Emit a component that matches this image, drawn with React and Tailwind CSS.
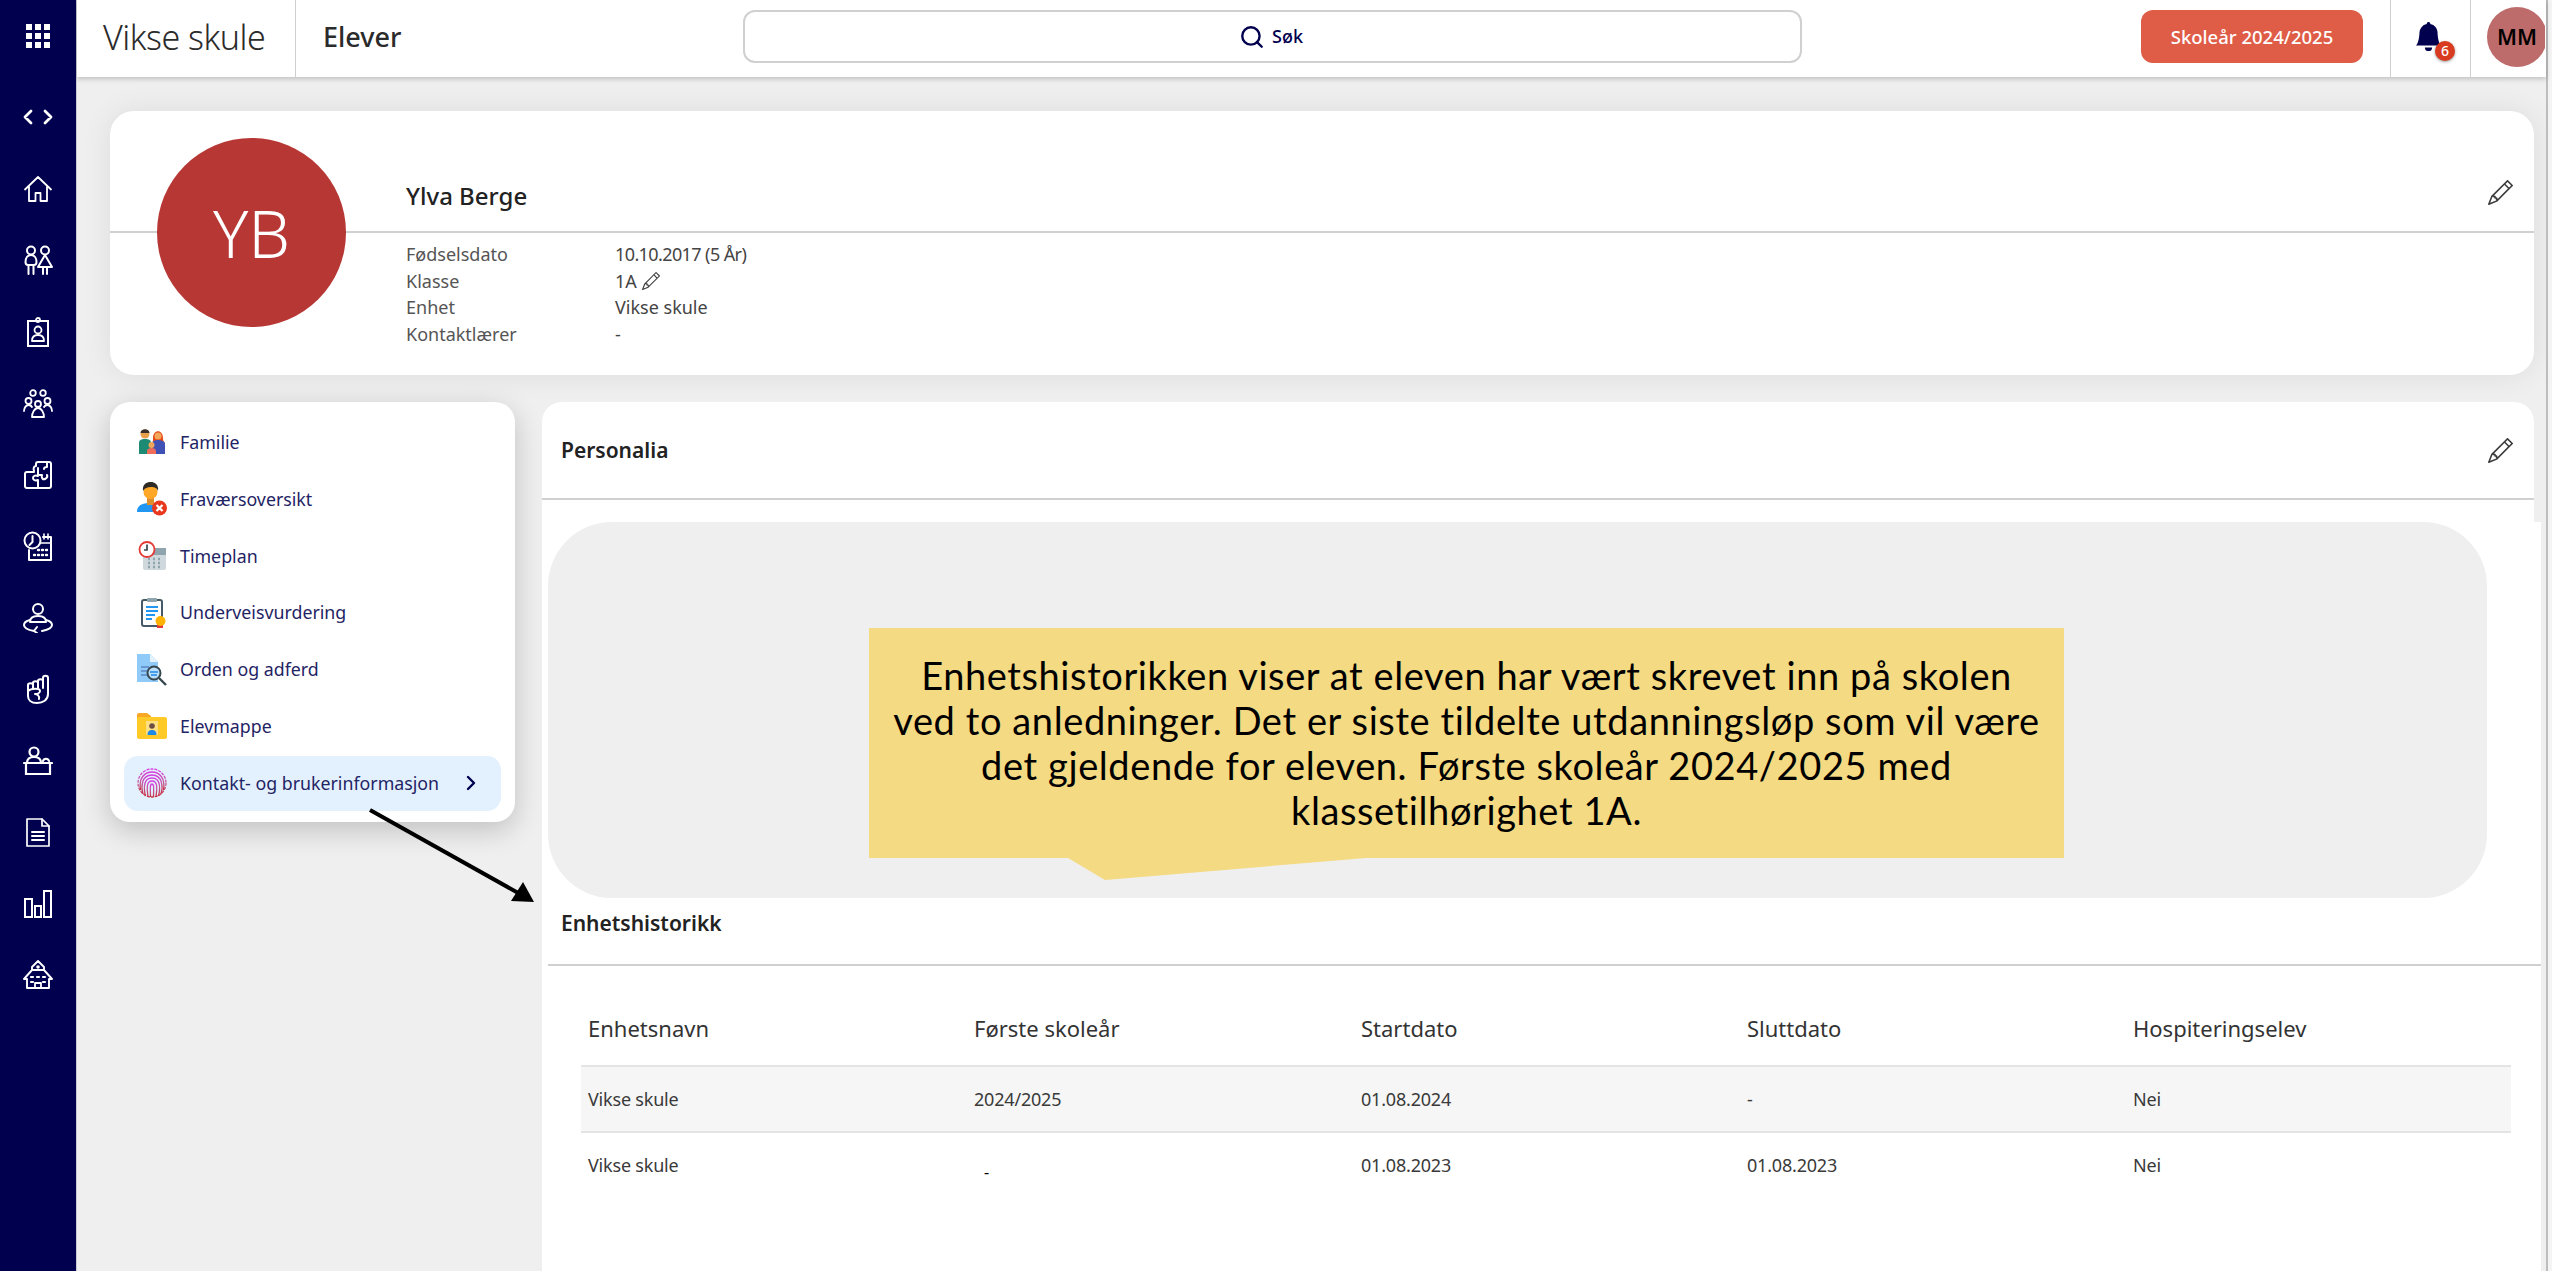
import { Search, ChevronRight } from 'lucide-react';
import { BsPencil, BsBellFill } from 'react-icons/bs';

const uiFont = "font-['Noto_Sans',sans-serif]";

function Ico({ children, sw = 1.8 }) {
  return (
    <svg viewBox="0 0 30 30" fill="none" stroke="white" strokeWidth={sw} strokeLinejoin="round" strokeLinecap="round" className="w-[30px] h-[30px]">
      {children}
    </svg>
  );
}

const sideIcons = [
  <Ico key="home"><path d="M2 15.5 15 3l13 12.500M6 12.500V27h6.500v-8h5v8H24V12.500" /></Ico>,
  <Ico key="kids" sw={2}><circle cx="8" cy="5.500" r="4" /><circle cx="22" cy="5.500" r="4" /><path d="M2.500 17c0-4 2-7 5.500-7s5.500 3 5.500 7c0 2-1 3-2.500 3H5c-1.500 0-2.500-1-2.500-3ZM5.500 20v9M10.500 20v9M22 10l7 12H15ZM20 22v7M24 22v7" /></Ico>,
  <Ico key="badge"><rect x="5" y="4" width="20" height="25" strokeLinejoin="miter" strokeWidth="2" /><circle cx="15" cy="3" r="2" /><circle cx="15" cy="13" r="3.500" /><path d="M9 24c0-4 2-6 6-6s6 2 6 6Z" /></Ico>,
  <Ico key="people"><circle cx="10" cy="5" r="2.800" /><circle cx="20" cy="5" r="2.800" /><circle cx="5.500" cy="13" r="3" /><circle cx="15" cy="16" r="3" /><circle cx="24.500" cy="13" r="3" /><path d="M1 23c0-3 2-6 4.500-6s3 1 3.500 2M29 23c0-3-2-6-4.500-6s-3 1-3.500 2M9 29c0-4 2.500-9 6-9s6 5 6 9Z" /></Ico>,
  <Ico key="puzzle" sw={2}><path d="M11 11c-1-3 0-5 2-5V4a2 2 0 0 1 2-2h11a2 2 0 0 1 2 2v22a2 2 0 0 1-2 2H4a2 2 0 0 1-2-2V14a2 2 0 0 1 2-2h7" /><path d="M15 8v8c-3-1-5 0-5 2s2 3 5 2v8M15 15h4c-1 3 1 5 3 4s3-2 2-4M24 2v5c-2 0-3 1-3 2" /></Ico>,
  <Ico key="calendar" sw={2}><circle cx="9.500" cy="9.500" r="8" /><path d="M9.500 5v6l-3 3M20 6h8v23H6v-10" /><path d="M21 3v5M25 3v5M18 12h10" strokeWidth="1.600" /><path d="M11 24h1M15 24h1M19 24h1M23 24h1M15 19h1M19 19h1M23 19h1" strokeWidth="2.400" /></Ico>,
  <Ico key="rotate" sw={2}><circle cx="15" cy="6" r="5" /><path d="M7 19c0-4 3-6 8-6s8 2 8 6Z" /><path d="M7 17c-4 1-6 3-6 5 0 3 4 5 10 6M23 17c4 1 6 3 6 5 0 3-5 5-10 6M14 24l-3 4 3 2" /></Ico>,
  <Ico key="hand" sw={2}><path d="M20 14V4c0-3 5-3 5 0v13M15 14V7c0-2.500 5-2.500 5 0M10 14V9c0-2.500 5-2.500 5 0M5 16v-5c0-2.500 5-2.500 5 0" /><path d="M5 15v7c0 4 3 7 9 7s11-3 11-9v-3" /><path d="M5 17c3-3 12-3 12 0 0 2-3 3-5 3 2 0 5 2 4 5" /></Ico>,
  <Ico key="desk" sw={2.200}><circle cx="11" cy="6" r="4.500" /><path d="M4 17c0-4 3-6 7-6s7 2 7 6M20 15c1-3 5-3 6 0" /><path d="M3 17h24v11H3ZM1 17h28" strokeLinejoin="miter" /></Ico>,
  <Ico key="doc" sw={1.700}><path d="M4 2h15l7 7v20H4Z" /><path d="M19 2v7h7" /><path d="M9 15h12M9 19h12M9 23h12" strokeWidth="2" /></Ico>,
  <Ico key="chart" sw={2}><path d="M2 10h7v18H2ZM12 17h6v11h-6ZM21 2h7v26h-7Z" strokeLinejoin="miter" /></Ico>,
  <Ico key="school"><path d="M15 1l6 6v3l8 9h-3v9H4v-9H1l8-9V7Z" strokeWidth="1.900" /><path d="M9 10h12" /><circle cx="15" cy="7" r="1.800" fill="white" stroke="none" /><path d="M12 28v-5h6v5" /><path d="M8 17h2M14 17h2M20 17h2M8 22h2M20 22h2" strokeWidth="2.200" /></Ico>,
];

function Sidebar() {
  return (
    <aside className="w-[77px] shrink-0 bg-[#00004f] border-r border-[#c9c9d8] flex flex-col items-center">
      <div className="h-[72px] flex items-center">
        <div className="grid grid-cols-3 gap-[3px]">
          {[...Array(9)].map((_, i) => (
            <span key={i} className="w-[6px] h-[6px] bg-white" />
          ))}
        </div>
      </div>
      <div className="h-[72px] mt-[9px] flex items-center">
        <svg viewBox="0 0 30 16" fill="none" stroke="white" strokeWidth="2.800" strokeLinecap="round" strokeLinejoin="round" className="w-[30px] h-[16px]">
          <path d="M8 2 2 8l6 6M22 2l6 6-6 6" />
        </svg>
      </div>
      {sideIcons.map((icon, i) => (
        <div key={i} className="h-[71.500px] flex items-center shrink-0">
          {icon}
        </div>
      ))}
    </aside>
  );
}

function Header() {
  return (
    <header className={`h-[77px] shrink-0 bg-white flex items-stretch shadow-[0_2px_5px_rgba(0,0,0,0.2)] z-10 ${uiFont}`}>
      <div className="w-[219px] border-r border-[#cfcfcf] pl-[26px] pb-[3px] flex items-center text-[34px] font-light text-[#2b2b2b] tracking-[-0.5px]">
        Vikse skule
      </div>
      <div className="w-[447px] pl-[27px] pb-[3px] flex items-center text-[27px] font-medium text-[#2b2b2b]">Elever</div>
      <button className="w-[1059px] h-[53px] mb-[4px] self-center border-2 border-[#d0d0d0] rounded-[12px] flex items-center justify-center gap-[7px] text-[#00004f] text-[18px] font-medium pr-[3px]">
        <Search size={26} strokeWidth={2.2} />
        Søk
      </button>
      <button className="ml-[339px] w-[222px] h-[53px] mb-[4px] self-center rounded-[12px] bg-[#df5c47] text-white text-[18.500px] font-medium">
        Skoleår 2024/2025
      </button>
      <div className="ml-[27px] w-[81px] border-x border-[#cfcfcf] flex items-center justify-center relative">
        <BsBellFill className="text-[#00004f] text-[29px] -translate-y-[2px] -translate-x-[2px]" />
        <span className="absolute left-[44px] top-[41px] w-[20px] h-[20px] rounded-full bg-[#d83b1f] text-white text-[14px] leading-[20px] text-center font-medium shadow-[0_1px_3px_rgba(0,0,0,0.4)]">
          6
        </span>
      </div>
      <div className="ml-[16px] w-[58px] overflow-hidden self-center mb-[3px] shrink-0">
        <div className="w-[60px] h-[60px] rounded-full bg-[#bd6b6b] text-black text-[21.500px] font-semibold flex items-center justify-center">
          MM
        </div>
      </div>
    </header>
  );
}

function ProfileCard() {
  const rows = [
    ['Fødselsdato', '10.10.2017 (5 År)', 'tracking-[-0.6px]'],
    ['Klasse', '1A', ''],
    ['Enhet', 'Vikse skule', ''],
    ['Kontaktlærer', '-', ''],
  ];
  return (
    <section className="relative h-[264px] rounded-[24px] bg-white shadow-[0_0_30px_rgba(0,0,0,0.08)]">
      <div className="h-[122px] border-b-2 border-[#d0d0d0] pl-[296px] pr-[21px] flex items-end justify-between">
        <h1 className="text-[24px] font-medium text-[#222] leading-[34px] pb-[18px]">Ylva Berge</h1>
        <BsPencil className="text-[#3c3c3c] text-[25px] mb-[26px]" />
      </div>
      <div className="pl-[296px] pt-[8px] text-[18px] leading-[26.600px] text-[#444]">
        {rows.map(([k, v, extra]) => (
          <div key={k} className="flex">
            <span className="w-[209px] text-[#555]">{k}</span>
            <span className={`flex items-center gap-[5px] ${extra}`}>
              {v}
              {k === 'Klasse' && <BsPencil className="text-[18px] text-[#3c3c3c]" />}
            </span>
          </div>
        ))}
      </div>
      <div className="absolute left-[47px] top-[27px] w-[189px] h-[189px] rounded-full bg-[#b73735] text-white text-[66px] font-light flex items-center justify-center">
        YB
      </div>
    </section>
  );
}

function FamilyIcon() {
  return (
    <svg viewBox="0 0 30 30" className="w-[30px] h-[30px]">
      <circle cx="8" cy="7" r="4.500" fill="#e9a04c" />
      <path d="M3.500 6c0-5 9-5 9 0-3 0-6 0-9 0Z" fill="#3a2f2a" />
      <path d="M2 27V16c0-3 2-4 6-4s6 1 6 4v11Z" fill="#1d8a73" />
      <path d="M16 11c0-9 10-9 10 0 0 3 1 4 2 5H15c1-1 1-2 1-5Z" fill="#e64a19" />
      <circle cx="21" cy="9" r="3.500" fill="#f2a65a" />
      <path d="M15 27V17c0-3 3-4 6-4s7 1 7 4v10Z" fill="#3f51b5" />
      <circle cx="14.500" cy="18" r="3" fill="#f2a65a" />
      <path d="M10 27v-3c0-2 2-3 4.500-3s4.500 1 4.500 3v3Z" fill="#ef6c5a" />
    </svg>
  );
}

function AbsenceIcon() {
  return (
    <svg viewBox="0 0 30 34" className="w-[30px] h-[34px]">
      <path d="M0 30c0-6 4-9 13-9s13 3 13 9Z" fill="#2196f3" />
      <rect x="10" y="15" width="7" height="8" fill="#e08e2b" />
      <circle cx="13.500" cy="10" r="7" fill="#ffa726" />
      <path d="M6 9c-1-8 5-9 8-9s8 2 7 9c-1-3-3-4-7-4s-6 1-8 4Z" fill="#2e2a26" />
      <circle cx="22.500" cy="26" r="7.500" fill="#e8391f" />
      <path d="m19.500 23 6 6m0-6-6 6" stroke="white" strokeWidth="2.200" />
    </svg>
  );
}

function ScheduleIcon() {
  return (
    <svg viewBox="0 0 30 30" className="w-[30px] h-[30px]">
      <rect x="6" y="7" width="23" height="22" rx="2" fill="#cfd8dc" />
      <path d="M8 7h21v7H8Z" fill="#90a4ae" />
      <path d="M11 18h2M16 18h2M21 18h2M11 22h2M16 22h2M21 22h2M11 26h2M16 26h2M21 26h2" stroke="#90a4ae" strokeWidth="2.500" />
      <circle cx="10" cy="8.500" r="7.500" fill="white" stroke="#e53935" strokeWidth="1.800" />
      <path d="M10 3.500v5.500H7" stroke="#37474f" strokeWidth="1.700" fill="none" />
    </svg>
  );
}

function AssessmentIcon() {
  return (
    <svg viewBox="0 0 30 32" className="w-[30px] h-[32px]">
      <rect x="5" y="3" width="20" height="26" rx="2" fill="white" stroke="#455a64" strokeWidth="2" />
      <rect x="10" y="1" width="10" height="4" rx="1" fill="#90a4ae" />
      <path d="M9 10h12M9 14h12M9 18h9M9 22h6" stroke="#2196f3" strokeWidth="2" />
      <path d="M20 27h6v4h-6Z" fill="#e53935" />
      <circle cx="23.500" cy="24" r="5" fill="#ffb300" />
    </svg>
  );
}

function ConductIcon() {
  return (
    <svg viewBox="0 0 30 32" className="w-[30px] h-[32px]">
      <path d="M0 0h13l8 8v20H0Z" fill="#90caf9" />
      <path d="M13 0l8 8h-8Z" fill="#e3f2fd" />
      <path d="M4 13h8M4 17h6M4 21h6" stroke="#5c86c4" strokeWidth="1.500" />
      <circle cx="17" cy="19" r="6.500" fill="#bbdefb" stroke="#37474f" strokeWidth="2" />
      <path d="M13 18h8M14 21h6" stroke="#1e88e5" strokeWidth="1.500" />
      <path d="m22 24 7 7" stroke="#37474f" strokeWidth="2.400" />
    </svg>
  );
}

function FolderIcon() {
  return (
    <svg viewBox="0 0 30 26" className="w-[30px] h-[26px]">
      <path d="M0 2a2 2 0 0 1 2-2h8l4 3v3H0Z" fill="#f9a825" />
      <rect x="0" y="4" width="30" height="22" rx="2" fill="#ffca28" />
      <rect x="9" y="8" width="12" height="14" fill="#ffe082" />
      <circle cx="15" cy="13" r="2.800" fill="#6d4c41" />
      <path d="M10.500 22c0-4 2-5 4.500-5s4.500 1 4.500 5Z" fill="#1e88e5" />
    </svg>
  );
}

function FingerprintIcon() {
  return (
    <svg viewBox="0 0 30 30" fill="none" strokeWidth="1.300" className="w-[30px] h-[30px]">
      <defs>
        <linearGradient id="fp" x1="0" y1="0" x2="0" y2="1">
          <stop offset="0" stopColor="#d63be0" />
          <stop offset="0.500" stopColor="#c45a9a" />
          <stop offset="1" stopColor="#c9303f" />
        </linearGradient>
      </defs>
      <g stroke="url(#fp)">
        <circle cx="15" cy="15" r="14" strokeDasharray="3 1" />
        <path d="M3.500 22c-2-12 4-18 11.500-18s13.500 6 11.500 18" />
        <path d="M6 26c-2-6-2-19 9-19s11 13 9 19" />
        <path d="M8.500 28c-2-8-2-18 6.500-18s8.500 10 6.500 18" />
        <path d="M11 29c-1-8-2-16 4-16s5 8 4 16" />
        <path d="M13.500 29c0-6-1-13 1.500-13s1.500 7 1.500 13" />
      </g>
    </svg>
  );
}

const menuItems = [
  ['Familie', <FamilyIcon key="a" />],
  ['Fraværsoversikt', <AbsenceIcon key="b" />],
  ['Timeplan', <ScheduleIcon key="c" />],
  ['Underveisvurdering', <AssessmentIcon key="d" />],
  ['Orden og adferd', <ConductIcon key="e" />],
  ['Elevmappe', <FolderIcon key="f" />],
];

function SideMenu() {
  return (
    <nav className="w-[405px] h-[420px] shrink-0 rounded-[20px] bg-white px-[14px] pt-[12px] shadow-[0_8px_28px_rgba(0,0,0,0.2)] text-[17.800px] text-[#1f2464]">
      {menuItems.map(([label, icon]) => (
        <div key={label} className="h-[56.800px] flex items-center pl-[13px]">
          <span className="w-[43px] flex justify-start">{icon}</span>
          {label}
        </div>
      ))}
      <div className="h-[55px] mt-[1px] rounded-[14px] bg-[#e3f1fe] flex items-center pl-[13px] pr-[18px]">
        <span className="w-[43px] flex justify-start"><FingerprintIcon /></span>
        <span className="flex-1">Kontakt- og brukerinformasjon</span>
        <ChevronRight size={24} strokeWidth={2.4} className="text-[#00004f]" />
      </div>
    </nav>
  );
}

function Callout() {
  return (
    <div className="h-[376px] ml-[6px] mr-[54px] mt-[22px] rounded-[64px] bg-[#efefef] pt-[106px] pl-[321px]">
      <div className="relative w-[1195px] h-[230px] bg-[#f4da82] flex items-center justify-center text-center text-black text-[38px] leading-[45px] tracking-[0.6px] font-['Lato',sans-serif]">
        <p>
          Enhetshistorikken viser at eleven har vært skrevet inn på skolen
          <br />
          ved to anledninger. Det er siste tildelte utdanningsløp som vil være
          <br />
          det gjeldende for eleven. Første skoleår 2024/2025 med
          <br />
          klassetilhørighet 1A.
        </p>
        <svg viewBox="0 0 298 22" className="absolute left-[199px] top-[230px] w-[298px] h-[22px]">
          <path d="M0 0 37 22 298 0Z" fill="#f4da82" />
        </svg>
      </div>
    </div>
  );
}

const cols = ['Enhetsnavn', 'Første skoleår', 'Startdato', 'Sluttdato', 'Hospiteringselev'];

function HistoryTable() {
  const gridCols = 'grid grid-cols-[386px_387px_386px_386px_1fr] pl-[7px] items-center';
  return (
    <div className="ml-[39px] mr-[30px] mt-[37px] text-[#3a3a3a]">
      <div className={`${gridCols} h-[62px] pb-[12px] text-[22px] text-[#333]`}>
        {cols.map((c) => (
          <span key={c}>{c}</span>
        ))}
      </div>
      <div className={`${gridCols} h-[68px] bg-[#f6f6f6] border-y-2 border-[#e4e4e4] text-[18px] [&>*]:tracking-[-0.2px]`}>
        <span>Vikse skule</span>
        <span>2024/2025</span>
        <span>01.08.2024</span>
        <span>-</span>
        <span>Nei</span>
      </div>
      <div className={`${gridCols} h-[64px] text-[18px] [&>*]:tracking-[-0.2px]`}>
        <span>Vikse skule</span>
        <span className="pl-[10px] pt-[14px] text-[16px] text-black">-</span>
        <span>01.08.2023</span>
        <span>01.08.2023</span>
        <span>Nei</span>
      </div>
    </div>
  );
}

function PersonaliaPanel() {
  return (
    <section className="flex-1 rounded-t-[20px] bg-white">
      <div className="h-[98px] border-b-2 border-[#d0d0d0] pl-[19px] pr-[21px] flex items-center justify-between">
        <h2 className="text-[21px] font-semibold text-[#222] translate-y-[1px]">Personalia</h2>
        <BsPencil className="text-[#3c3c3c] text-[25px]" />
      </div>
      <div className="-mr-[7px] h-[900px] bg-white">
        <Callout />
        <h3 className="pl-[13px] pt-[10px] h-[68px] border-b-2 border-[#d0d0d0] ml-[6px] text-[21px] font-semibold text-[#222]">
          Enhetshistorikk
        </h3>
        <HistoryTable />
      </div>
    </section>
  );
}

export default function App() {
  return (
    <div className={`w-[2552px] h-[1271px] flex overflow-hidden bg-[#f4f4f4] ${uiFont}`}>
      <Sidebar />
      <div className="w-[2471px] shrink-0 flex flex-col border-r-2 border-[#bdbdbd]">
        <Header />
        <main className="flex-1 bg-[#efefef] pt-[34px] pl-[33px] pr-[12px] min-h-0 relative overflow-hidden">
          <ProfileCard />
          <div className="flex gap-[27px] mt-[27px] h-[900px]">
            <SideMenu />
            <PersonaliaPanel />
          </div>
          {/* pil fra menyen ned til enhetshistorikken */}
          <svg viewBox="0 0 170 96" className="absolute left-[291px] top-[731px] w-[170px] h-[96px]">
            <path d="M2 2 152 86" stroke="black" strokeWidth="4" />
            <path d="M166 94 143 93 155 74Z" fill="black" />
          </svg>
        </main>
      </div>
    </div>
  );
}
